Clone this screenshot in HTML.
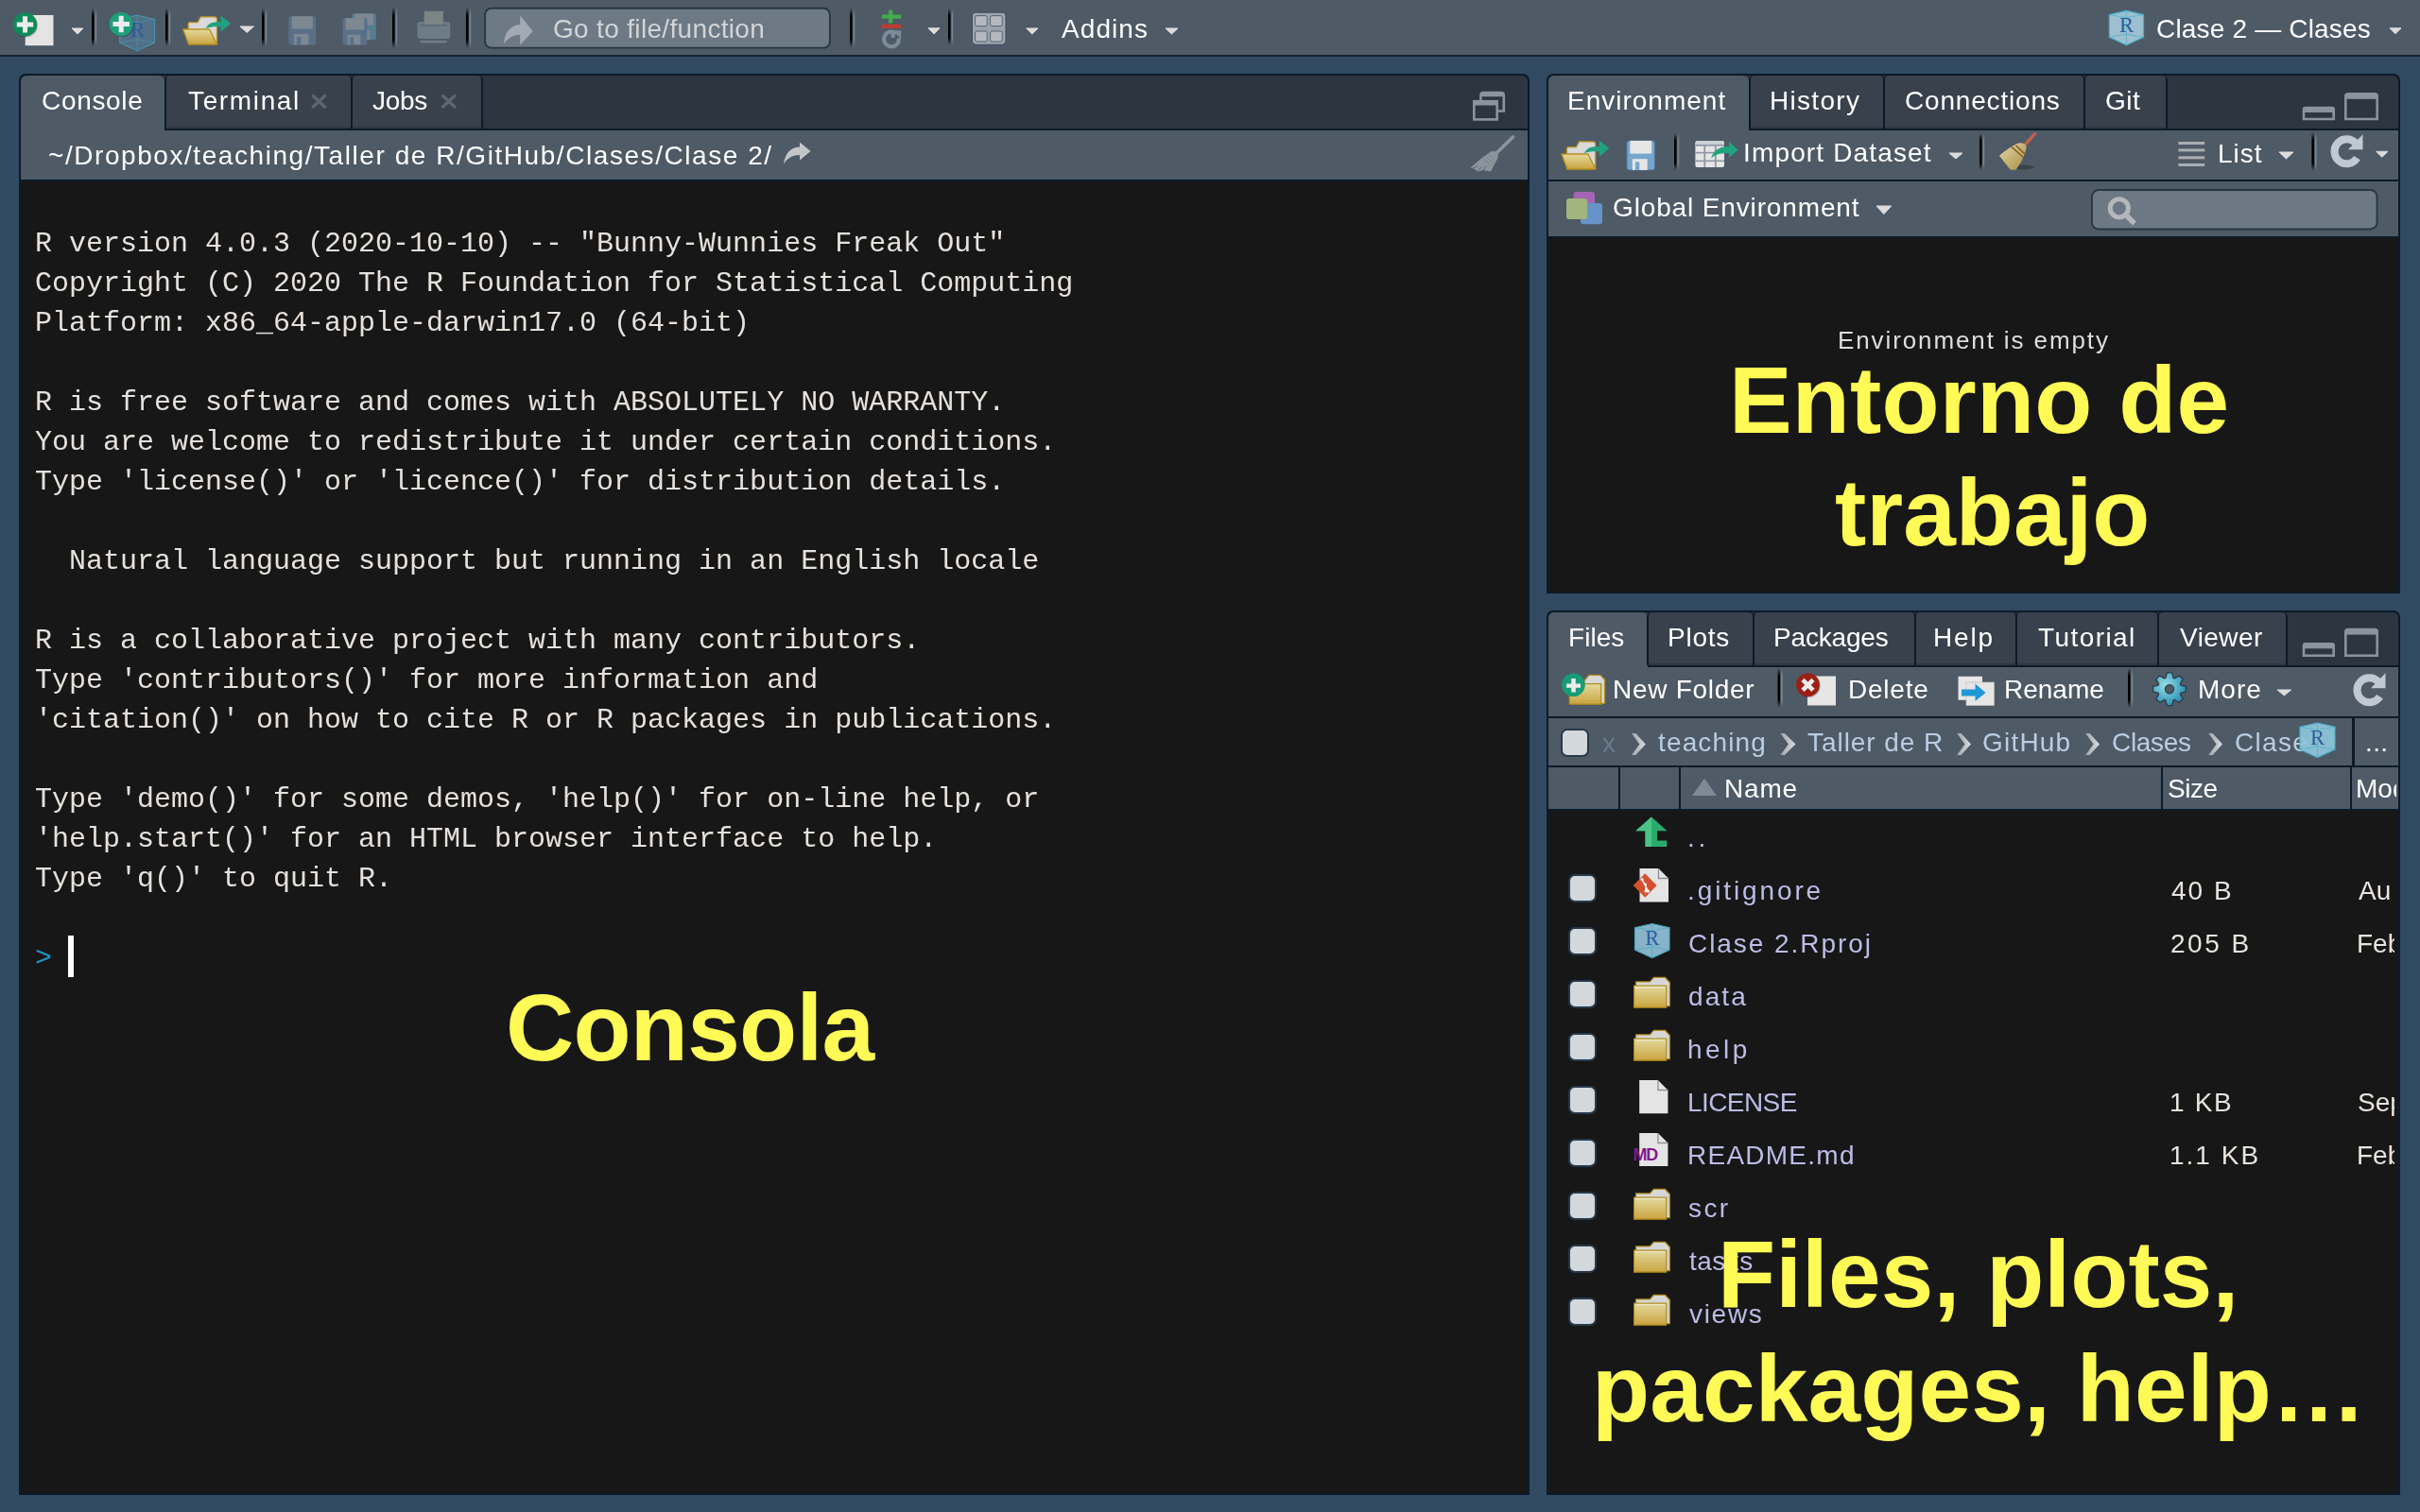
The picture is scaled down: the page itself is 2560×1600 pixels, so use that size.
<!DOCTYPE html>
<html><head><meta charset="utf-8"><title>RStudio</title>
<style>
html,body{margin:0;padding:0;}
body{width:2560px;height:1600px;position:relative;overflow:hidden;background:#314a62;font-family:'Liberation Sans', sans-serif;}
.a{position:absolute;}
.t{white-space:pre;will-change:transform;}
#console,.aa{will-change:transform;}
svg{position:absolute;overflow:visible;}
</style></head><body>
<div class="a" style="left:0px;top:0px;width:2560px;height:58px;background:#4e5a66;"></div><div class="a" style="left:0px;top:58px;width:2560px;height:2px;background:#152433;"></div><div class="a" style="left:20px;top:78px;width:1598px;height:1504px;background:#0c1a29;border-radius:7px 7px 0 0"></div><div class="a" style="left:22px;top:80px;width:1594px;height:56px;background:#2d3640;border-radius:6px 6px 0 0"></div><div class="a" style="left:22px;top:136px;width:1594px;height:2px;background:#0c1a29;"></div><div class="a" style="left:22px;top:80px;width:152px;height:58px;background:#4e5a66;border-radius:6px 6px 0 0"></div><div class="a" style="left:174px;top:80px;width:199px;height:56px;background:#0c1a29;border-radius:5px 5px 0 0"></div><div class="a" style="left:176px;top:80px;width:195px;height:56px;background:#38414c;border-radius:4px 4px 0 0"></div><div class="a" style="left:176px;top:134px;width:195px;height:2px;background:#2f3842;"></div><div class="a" style="left:371px;top:80px;width:140px;height:56px;background:#0c1a29;border-radius:5px 5px 0 0"></div><div class="a" style="left:373px;top:80px;width:136px;height:56px;background:#38414c;border-radius:4px 4px 0 0"></div><div class="a" style="left:373px;top:134px;width:136px;height:2px;background:#2f3842;"></div><div class="a" style="left:22px;top:138px;width:1594px;height:52px;background:#4e5a66;"></div><div class="a" style="left:22px;top:190px;width:1594px;height:2px;background:#0c1a29;"></div><div class="a" style="left:22px;top:192px;width:1594px;height:1388px;background:#171717;"></div><div class="a" style="left:1636px;top:78px;width:903px;height:550px;background:#0c1a29;border-radius:7px 7px 0 0"></div><div class="a" style="left:1638px;top:80px;width:899px;height:56px;background:#2d3640;border-radius:6px 6px 0 0"></div><div class="a" style="left:1638px;top:136px;width:899px;height:2px;background:#0c1a29;"></div><div class="a" style="left:1638px;top:80px;width:212px;height:58px;background:#4e5a66;border-radius:6px 6px 0 0"></div><div class="a" style="left:1850px;top:80px;width:144px;height:56px;background:#0c1a29;border-radius:5px 5px 0 0"></div><div class="a" style="left:1852px;top:80px;width:140px;height:56px;background:#38414c;border-radius:4px 4px 0 0"></div><div class="a" style="left:1852px;top:134px;width:140px;height:2px;background:#2f3842;"></div><div class="a" style="left:1992px;top:80px;width:214px;height:56px;background:#0c1a29;border-radius:5px 5px 0 0"></div><div class="a" style="left:1994px;top:80px;width:210px;height:56px;background:#38414c;border-radius:4px 4px 0 0"></div><div class="a" style="left:1994px;top:134px;width:210px;height:2px;background:#2f3842;"></div><div class="a" style="left:2204px;top:80px;width:89px;height:56px;background:#0c1a29;border-radius:5px 5px 0 0"></div><div class="a" style="left:2206px;top:80px;width:85px;height:56px;background:#38414c;border-radius:4px 4px 0 0"></div><div class="a" style="left:2206px;top:134px;width:85px;height:2px;background:#2f3842;"></div><div class="a" style="left:1638px;top:138px;width:899px;height:52px;background:#4e5a66;"></div><div class="a" style="left:1638px;top:190px;width:899px;height:2px;background:#0c1a29;"></div><div class="a" style="left:1638px;top:192px;width:899px;height:58px;background:#4e5a66;"></div><div class="a" style="left:1638px;top:250px;width:899px;height:2px;background:#0c1a29;"></div><div class="a" style="left:1638px;top:252px;width:899px;height:374px;background:#171717;"></div><div class="a" style="left:1636px;top:646px;width:903px;height:936px;background:#0c1a29;border-radius:7px 7px 0 0"></div><div class="a" style="left:1638px;top:648px;width:899px;height:56px;background:#2d3640;border-radius:6px 6px 0 0"></div><div class="a" style="left:1638px;top:704px;width:899px;height:2px;background:#0c1a29;"></div><div class="a" style="left:1638px;top:648px;width:105px;height:58px;background:#4e5a66;border-radius:6px 6px 0 0"></div><div class="a" style="left:1742px;top:648px;width:114px;height:56px;background:#0c1a29;border-radius:5px 5px 0 0"></div><div class="a" style="left:1744px;top:648px;width:110px;height:56px;background:#38414c;border-radius:4px 4px 0 0"></div><div class="a" style="left:1744px;top:702px;width:110px;height:2px;background:#2f3842;"></div><div class="a" style="left:1854px;top:648px;width:173px;height:56px;background:#0c1a29;border-radius:5px 5px 0 0"></div><div class="a" style="left:1856px;top:648px;width:169px;height:56px;background:#38414c;border-radius:4px 4px 0 0"></div><div class="a" style="left:1856px;top:702px;width:169px;height:2px;background:#2f3842;"></div><div class="a" style="left:2025px;top:648px;width:109px;height:56px;background:#0c1a29;border-radius:5px 5px 0 0"></div><div class="a" style="left:2027px;top:648px;width:105px;height:56px;background:#38414c;border-radius:4px 4px 0 0"></div><div class="a" style="left:2027px;top:702px;width:105px;height:2px;background:#2f3842;"></div><div class="a" style="left:2132px;top:648px;width:152px;height:56px;background:#0c1a29;border-radius:5px 5px 0 0"></div><div class="a" style="left:2134px;top:648px;width:148px;height:56px;background:#38414c;border-radius:4px 4px 0 0"></div><div class="a" style="left:2134px;top:702px;width:148px;height:2px;background:#2f3842;"></div><div class="a" style="left:2282px;top:648px;width:138px;height:56px;background:#0c1a29;border-radius:5px 5px 0 0"></div><div class="a" style="left:2284px;top:648px;width:134px;height:56px;background:#38414c;border-radius:4px 4px 0 0"></div><div class="a" style="left:2284px;top:702px;width:134px;height:2px;background:#2f3842;"></div><div class="a" style="left:1638px;top:706px;width:899px;height:52px;background:#4e5a66;"></div><div class="a" style="left:1638px;top:758px;width:899px;height:2px;background:#0c1a29;"></div><div class="a" style="left:1638px;top:760px;width:899px;height:50px;background:#4e5a66;"></div><div class="a" style="left:1638px;top:810px;width:899px;height:2px;background:#0c1a29;"></div><div class="a" style="left:2487.5px;top:760px;width:3.0px;height:50px;background:#0c1a29;"></div><div class="a" style="left:1638px;top:812px;width:899px;height:44px;background:#4e5a66;"></div><div class="a" style="left:1638px;top:856px;width:899px;height:2px;background:#0c1a29;"></div><div class="a" style="left:1712px;top:812px;width:2px;height:44px;background:#0c1a29;"></div><div class="a" style="left:1776px;top:812px;width:2px;height:44px;background:#0c1a29;"></div><div class="a" style="left:2286px;top:812px;width:2px;height:44px;background:#0c1a29;"></div><div class="a" style="left:2486px;top:812px;width:2px;height:44px;background:#0c1a29;"></div><div class="a" style="left:1638px;top:858px;width:899px;height:722px;background:#171717;"></div><svg class="a" style="left:0;top:0" width="2560" height="1600" viewBox="0 0 2560 1600"><defs>
<linearGradient id="gfold" x1="0" y1="0" x2="0" y2="1"><stop offset="0" stop-color="#e3da9e"/><stop offset="1" stop-color="#c9a440"/></linearGradient>
<linearGradient id="gsep" x1="0" y1="0" x2="0" y2="1"><stop offset="0" stop-color="#000" stop-opacity="0"/><stop offset="0.2" stop-color="#000" stop-opacity="1"/><stop offset="0.8" stop-color="#000" stop-opacity="1"/><stop offset="1" stop-color="#000" stop-opacity="0"/></linearGradient>
<linearGradient id="gsepl" x1="0" y1="0" x2="0" y2="1"><stop offset="0" stop-color="#7a8693" stop-opacity="0"/><stop offset="0.2" stop-color="#7a8693" stop-opacity="1"/><stop offset="0.8" stop-color="#7a8693" stop-opacity="1"/><stop offset="1" stop-color="#7a8693" stop-opacity="0"/></linearGradient>
<linearGradient id="gbroom" x1="0" y1="0" x2="1" y2="1"><stop offset="0" stop-color="#e2d9a6"/><stop offset="1" stop-color="#a98c45"/></linearGradient>
<radialGradient id="ggear" cx="0.38" cy="0.38" r="0.65"><stop offset="0" stop-color="#95dde4"/><stop offset="1" stop-color="#2a8fb4"/></radialGradient>
<linearGradient id="gup" x1="0" y1="0" x2="1" y2="0"><stop offset="0.5" stop-color="#4cc287"/><stop offset="0.5" stop-color="#2aaa6a"/></linearGradient>
<linearGradient id="gchev" x1="0" y1="0" x2="1" y2="0"><stop offset="0" stop-color="#9ca3ab"/><stop offset="1" stop-color="#dcdee0"/></linearGradient>
</defs><rect x="26.7" y="16" width="29.8" height="32.2" fill="#e4e4e4"/><circle cx="27.3" cy="26.9" r="12.6" fill="#000" opacity="0.25"/><circle cx="26.5" cy="25.9" r="12.6" fill="#0c8c58"/><path d="M17.806 23.38 H23.98 V17.206 H29.02 V23.38 H35.194 V28.419999999999998 H29.02 V34.593999999999994 H23.98 V28.419999999999998 H17.806 Z" fill="#ececec"/><path d="M76 30 L88 30 L82.0 36 Z" fill="#dcdcdc" stroke="#dcdcdc" stroke-width="1" stroke-linejoin="round"/><rect x="97" y="9" width="2.6" height="40" fill="url(#gsep)"/><rect x="100.6" y="9" width="1.6" height="40" fill="url(#gsepl)"/><g opacity="0.9"><path d="M145.15 16.2 L163.6 20.5125 L163.6 45.075 L145.15 53.7 L126.7 45.075 L126.7 20.5125 Z" fill="#52728a" stroke="#4898b3" stroke-width="1.2"/><path d="M145.15 16.2 V53.7 M126.7 20.5125 L145.15 23.7 L163.6 20.5125 M126.7 45.075 L145.15 41.7 L163.6 45.075" stroke="#4898b3" stroke-width="0.9" fill="none" opacity="0.8"/><text x="145.15" y="39.45" font-family="Liberation Serif" font-size="23.2" fill="#2a5fa8" text-anchor="middle">R</text></g><circle cx="129.0" cy="26.5" r="12.6" fill="#000" opacity="0.25"/><circle cx="128.2" cy="25.5" r="12.6" fill="#1f9f79"/><path d="M119.50599999999999 22.98 H125.67999999999999 V16.806 H130.72 V22.98 H136.89399999999998 V28.02 H130.72 V34.194 H125.67999999999999 V28.02 H119.50599999999999 Z" fill="#ececec"/><rect x="175" y="9" width="2.6" height="40" fill="url(#gsep)"/><rect x="178.6" y="9" width="1.6" height="40" fill="url(#gsepl)"/><g transform="translate(193.7 17) scale(1.0)"><path d="M5.4 14 V8.5 Q5.4 6.7 7.2 6.7 H15.3 L18.6 0.8 H33.2 Q35.8 0.8 35.8 3.5 V29.9 H6 Z" fill="#d9d9d9" stroke="#b8901c" stroke-width="1.3" stroke-linejoin="round"/><path d="M-0.1 14 H27.9 L35.8 29.9 H6 Z" fill="url(#gfold)" stroke="#b8901c" stroke-width="1.3" stroke-linejoin="round"/><path d="M23.9 13 C 27 6.5, 33 5.8, 39.8 6.3 V-0.5 L50.3 8 L39.8 16.7 V11.5 C 33 11, 28 11.8, 23.9 13 Z" fill="#21a27f"/></g><path d="M254 28 L268.5 28 L261.25 34.4 Z" fill="#dcdcdc" stroke="#dcdcdc" stroke-width="1" stroke-linejoin="round"/><rect x="277" y="9" width="2.6" height="40" fill="url(#gsep)"/><rect x="280.6" y="9" width="1.6" height="40" fill="url(#gsepl)"/><g opacity="1.0"><rect x="305.2" y="17.2" width="29.0" height="30.2" rx="2.5" fill="#5a7088"/><rect x="308.59299999999996" y="17.2" width="22.214" height="13.288" fill="#7d8893"/><rect x="311.0" y="35.924" width="15.370000000000001" height="11.475999999999999" fill="#7d8893"/><rect x="313.9" y="38.944" width="4.35" height="8.456000000000001" fill="#5a7088"/></g><g opacity="1.0"><rect x="372.3" y="14.4" width="25.5" height="27.9" rx="2.5" fill="#567d92"/><rect x="375.2835" y="14.4" width="19.533" height="12.276" fill="#7d8893"/><rect x="377.40000000000003" y="31.698" width="13.515" height="10.602" fill="#7d8893"/><rect x="379.95" y="34.488" width="3.8249999999999997" height="7.812" fill="#567d92"/></g><g opacity="1.0"><rect x="362.5" y="19.1" width="25.899999999999977" height="28.299999999999997" rx="2.5" fill="#5a7088"/><rect x="365.5303" y="19.1" width="19.839399999999983" height="12.451999999999998" fill="#7d8893"/><rect x="367.68" y="36.646" width="13.726999999999988" height="10.754" fill="#7d8893"/><rect x="370.27" y="39.476" width="3.8849999999999962" height="7.924" fill="#5a7088"/></g><rect x="415" y="8" width="2.6" height="43" fill="url(#gsep)"/><rect x="418.6" y="8" width="1.6" height="43" fill="url(#gsepl)"/><rect x="448.8" y="11.7" width="20.1" height="17" fill="#7b8586"/><rect x="441.4" y="23" width="34.9" height="18" rx="3.5" fill="#6e7b88"/><rect x="444.5" y="25.5" width="28.3" height="2" fill="#5c6874"/><rect x="448.8" y="18" width="20.1" height="8" fill="#7b8586"/><rect x="444.5" y="42.7" width="28.3" height="2.7" rx="1" fill="#6e7b88"/><rect x="493" y="8" width="2.6" height="43" fill="url(#gsep)"/><rect x="496.6" y="8" width="1.6" height="43" fill="url(#gsepl)"/><rect x="513.1" y="8.8" width="364.8" height="41.8" rx="6.5" fill="#6d7a85" stroke="#263646" stroke-width="1.9"/><path d="M563.7 33.1 L550.2 16.6 V26 C 540 26.5, 533.5 35, 533 46.3 C 537.5 40.5, 543 36.8, 550.2 36.8 V47.6 Z" fill="#a3a9b5"/><rect x="899" y="8.6" width="2.6" height="41.4" fill="url(#gsep)"/><rect x="902.6" y="8.6" width="1.6" height="41.4" fill="url(#gsepl)"/><rect x="933" y="15.5" width="20.2" height="4.1" fill="#3fae49"/><rect x="940.1" y="10.6" width="4.1" height="13.9" fill="#3fae49"/><rect x="933" y="25.8" width="20.2" height="4" fill="#c23b2e"/><path d="M944.5 33.7 A 7.9 7.9 0 1 0 950.8 40.2" fill="none" stroke="#7d8c9b" stroke-width="4"/><path d="M942.6 32.3 H953.2 V41 L948.5 36.5 H946.5 V40 H942.6 Z" fill="#7d8c9b"/><path d="M982 29.8 L994 29.8 L988.0 36 Z" fill="#dcdcdc" stroke="#dcdcdc" stroke-width="1" stroke-linejoin="round"/><rect x="1003" y="8.7" width="2.6" height="39.099999999999994" fill="url(#gsep)"/><rect x="1006.6" y="8.7" width="1.6" height="39.099999999999994" fill="url(#gsepl)"/><rect x="1028.4" y="13.2" width="35.6" height="34.1" rx="4" fill="#9aa3ad" stroke="#3b4957" stroke-width="1"/><rect x="1031.6" y="16.6" width="12.6" height="11" rx="2" fill="#b5b9bd" stroke="#56636f" stroke-width="1"/><rect x="1047.6" y="16.6" width="12.6" height="11" rx="2" fill="#b5b9bd" stroke="#56636f" stroke-width="1"/><rect x="1031.6" y="33" width="12.6" height="11" rx="2" fill="#b5b9bd" stroke="#56636f" stroke-width="1"/><rect x="1047.6" y="33" width="12.6" height="11" rx="2" fill="#b5b9bd" stroke="#56636f" stroke-width="1"/><path d="M1085.7 30 L1098 30 L1091.85 36 Z" fill="#dcdcdc" stroke="#dcdcdc" stroke-width="1" stroke-linejoin="round"/><path d="M1233 30 L1246 30 L1239.5 36 Z" fill="#dcdcdc" stroke="#dcdcdc" stroke-width="1" stroke-linejoin="round"/><g opacity="1.0"><path d="M2249.4 11.4 L2267.5 15.5745 L2267.5 39.351000000000006 L2249.4 47.7 L2231.3 39.351000000000006 L2231.3 15.5745 Z" fill="#9ebfd0" stroke="#4bb0c8" stroke-width="1.2"/><path d="M2249.4 11.4 V47.7 M2231.3 15.5745 L2249.4 18.660000000000004 L2267.5 15.5745 M2231.3 39.351000000000006 L2249.4 36.084 L2267.5 39.351000000000006" stroke="#4bb0c8" stroke-width="0.9" fill="none" opacity="0.8"/><text x="2249.4" y="33.906000000000006" font-family="Liberation Serif" font-size="22.5" fill="#2c5d9e" text-anchor="middle">R</text></g><path d="M2528 29.8 L2540 29.8 L2534.0 35.7 Z" fill="#dcdcdc" stroke="#dcdcdc" stroke-width="1" stroke-linejoin="round"/><path d="M330.3 100.5 L344.5 114 M344.5 100.5 L330.3 114" stroke="#5d6670" stroke-width="3.4"/><path d="M467.5 100.5 L482.0 114 M482.0 100.5 L467.5 114" stroke="#5d6670" stroke-width="3.4"/><path d="M1566.4 118 V101 Q1566.4 98 1569.5 98 H1588 Q1590.8 98 1590.8 101 V117.5 H1584" fill="none" stroke="#8b949c" stroke-width="2.6"/><rect x="1566.4" y="97.3" width="24.4" height="5" rx="2" fill="#8b949c"/><rect x="1559.3" y="107.2" width="24.4" height="19.2" fill="#2d3640" stroke="#8b949c" stroke-width="2.6"/><path d="M1558 111.5 V108.5 Q1558 106 1561 106 H1582 Q1585 106 1585 108.5 V111.5 Z" fill="#8b949c"/><path d="M857.5 160 L846 150.5 V155.5 C 838 155.5, 830.5 161, 829 173.5 C 833 167, 839 164, 846 164 V169.5 Z" fill="#c4c7ca"/><path d="M1600.5 145 L1582 163" stroke="#8b949c" stroke-width="3.6" stroke-linecap="round"/><path d="M1577 160.5 Q1580.5 158.5 1584.5 162.5 Q1585.5 166 1583 170 L1577 181.5 L1569 180 L1563 181.5 L1559 178.5 L1555.5 177.5 Q1562 172 1566.5 168 Z" fill="#8b949c"/><path d="M1569 168 L1578 176 M1571.5 165.5 L1580.5 173.5 M1574 163 L1582.5 170.5" stroke="#7a838b" stroke-width="0.9"/><path d="M1558 178 L1563 176 M1563 181 L1567 177 M1569 180.5 L1572 176" stroke="#4e5a66" stroke-width="0.8"/><path d="M2437 126.0 V115.7 Q2437 114.0 2439 114.0 H2467 Q2468.7 114.0 2468.7 115.7 V126.0 Z" fill="none" stroke="#8b949c" stroke-width="2.6"/><rect x="2437" y="114.0" width="31.7" height="5" fill="#8b949c"/><path d="M2481.3 126.0 V101.5 Q2481.3 99.3 2484 99.3 H2512 Q2514.7 99.3 2514.7 101.5 V126.0 Z" fill="none" stroke="#8b949c" stroke-width="2.6"/><rect x="2481.3" y="99.3" width="33.4" height="5.5" fill="#8b949c"/><g transform="translate(1652 149) scale(1.0)"><path d="M5.4 14 V8.5 Q5.4 6.7 7.2 6.7 H15.3 L18.6 0.8 H33.2 Q35.8 0.8 35.8 3.5 V29.9 H6 Z" fill="#d9d9d9" stroke="#b8901c" stroke-width="1.3" stroke-linejoin="round"/><path d="M-0.1 14 H27.9 L35.8 29.9 H6 Z" fill="url(#gfold)" stroke="#b8901c" stroke-width="1.3" stroke-linejoin="round"/><path d="M23.9 13 C 27 6.5, 33 5.8, 39.8 6.3 V-0.5 L50.3 8 L39.8 16.7 V11.5 C 33 11, 28 11.8, 23.9 13 Z" fill="#21a27f"/></g><g opacity="1.0"><rect x="1720.9" y="148.9" width="29.799999999999955" height="31.099999999999994" rx="2.5" fill="#77a5cc" stroke="#4a6d8e" stroke-width="1"/><rect x="1724.3866" y="148.9" width="22.826799999999967" height="13.683999999999997" fill="#e6e6e6"/><rect x="1726.8600000000001" y="168.18200000000002" width="15.793999999999977" height="11.817999999999998" fill="#e6e6e6"/><rect x="1729.8400000000001" y="171.292" width="4.469999999999993" height="8.707999999999998" fill="#77a5cc"/></g><rect x="1771" y="141" width="2.6" height="39" fill="url(#gsep)"/><rect x="1774.6" y="141" width="1.6" height="39" fill="url(#gsepl)"/><rect x="1793.4" y="148.9" width="30.6" height="28.2" rx="2" fill="#e6e6e6"/><path d="M1793.4 152.5 Q1793.4 148.9 1797 148.9 H1820.4 Q1824 148.9 1824 152.5 V153 H1793.4 Z" fill="#c8d0d8"/><rect x="1793.4" y="153" width="30.6" height="1.6" fill="#8e96a2"/><rect x="1793.4" y="160.8" width="30.6" height="1.6" fill="#8e96a2"/><rect x="1793.4" y="169.5" width="30.6" height="1.6" fill="#8e96a2"/><rect x="1802.4" y="153" width="1.8" height="24.1" fill="#8e96a2"/><rect x="1813.9" y="153" width="1.8" height="24.1" fill="#8e96a2"/><path d="M1810 167.4 C 1813 158, 1820 155, 1829 155 V150 L1838.6 158.5 L1829 166.9 V162 C 1821 161.5, 1815 163, 1810 167.4 Z" fill="#20a47f"/><path d="M2062 162 L2076 162 L2069.0 168 Z" fill="#dcdcdc" stroke="#dcdcdc" stroke-width="1" stroke-linejoin="round"/><rect x="2094" y="141" width="2.6" height="39" fill="url(#gsep)"/><rect x="2097.6" y="141" width="1.6" height="39" fill="url(#gsepl)"/><ellipse cx="2140" cy="177" rx="12" ry="2.5" fill="#000" opacity="0.25"/><path d="M2152.6 141.6 L2142.4 152.9" stroke="#c0604e" stroke-width="3.5" stroke-linecap="round"/><path d="M2114.9 164.8 Q2125 156 2134.8 151.5 Q2141 150 2143.7 155 Q2143 162 2138 171.4 L2132.5 179.7 H2126.8 Z" fill="url(#gbroom)"/><path d="M2128 155.5 L2141 167 M2132.5 154 L2142.5 163.5" stroke="#8a5a20" stroke-width="1.6"/><rect x="2304.4" y="150.0" width="27.8" height="3" fill="#a9aeb3"/><rect x="2304.4" y="157.4" width="27.8" height="3" fill="#a9aeb3"/><rect x="2304.4" y="165.29999999999998" width="27.8" height="3" fill="#a9aeb3"/><rect x="2304.4" y="173.0" width="27.8" height="3" fill="#a9aeb3"/><path d="M2411 161 L2426 161 L2418.5 168 Z" fill="#dcdcdc" stroke="#dcdcdc" stroke-width="1" stroke-linejoin="round"/><rect x="2445.4" y="140" width="2.6" height="40.69999999999999" fill="url(#gsep)"/><rect x="2449.0" y="140" width="1.6" height="40.69999999999999" fill="url(#gsepl)"/><path d="M2493.52 167.19 A13 13 0 1 1 2492.16 151.60" fill="none" stroke="#c0c8d2" stroke-width="8"/><path d="M2499.5 142.3 L2499.5 158.3 L2484.0 158.3 Z" fill="#c0c8d2"/><path d="M2513.7 160.3 L2526 160.3 L2519.85 166.3 Z" fill="#dcdcdc" stroke="#dcdcdc" stroke-width="1" stroke-linejoin="round"/><rect x="1664.6" y="203" width="22.5" height="21.5" rx="3" fill="#a565b3"/><rect x="1672" y="215" width="23" height="22.3" rx="3" fill="#6693c8"/><rect x="1657" y="210" width="22.2" height="22" rx="3" fill="#a2b57c"/><path d="M1985 218 L2000.7 218 L1992.85 226.6 Z" fill="#dcdcdc" stroke="#dcdcdc" stroke-width="1" stroke-linejoin="round"/><rect x="2213" y="201" width="301.5" height="41.5" rx="7" fill="#6c7883" stroke="#253545" stroke-width="1.8"/><circle cx="2241.8" cy="220.3" r="9.6" fill="none" stroke="#b3b8bd" stroke-width="5"/><path d="M2248.5 227 L2258 236.5" stroke="#b3b8bd" stroke-width="5.5"/><path d="M2437 693.7 V683 Q2437 681.3 2439 681.3 H2467 Q2468.7 681.3 2468.7 683 V693.7 Z" fill="none" stroke="#8b949c" stroke-width="2.6"/><rect x="2437" y="681.3" width="31.7" height="5" fill="#8b949c"/><path d="M2481.3 693.7 V668.3 Q2481.3 666.0999999999999 2484 666.0999999999999 H2512 Q2514.7 666.0999999999999 2514.7 668.3 V693.7 Z" fill="none" stroke="#8b949c" stroke-width="2.6"/><rect x="2481.3" y="666.0999999999999" width="33.4" height="5.5" fill="#8b949c"/><path d="M1675.8 720.5 L1681 714.4 H1693 L1697.6 719.2 V744.4 H1675.8 Z" fill="#d6d8d8" stroke="#b08a1a" stroke-width="1.3" stroke-linejoin="round"/><rect x="1660.2" y="723.6" width="33.5" height="21.6" fill="url(#gfold)" stroke="#b08a1a" stroke-width="1.2"/><circle cx="1664.5" cy="724.8" r="12.3" fill="#189c78"/><path d="M1657.1 723.4 H1662.2 V718 H1666.8 V723.4 H1672 V727.8 H1666.8 V732.5 H1662.2 V727.8 H1657.1 Z" fill="#ececec"/><rect x="1880.5" y="707" width="2.6" height="42" fill="url(#gsep)"/><rect x="1884.1" y="707" width="1.6" height="42" fill="url(#gsepl)"/><rect x="1912" y="715.5" width="30" height="31" fill="#e6e6e6"/><circle cx="1913.5" cy="725.8" r="12.4" fill="#000" opacity="0.2"/><circle cx="1912.5" cy="724.8" r="12.4" fill="#9c1f14"/><path d="M1907 719.3 L1918 730.3 M1918 719.3 L1907 730.3" stroke="#ececec" stroke-width="4.6"/><rect x="2071.5" y="715.8" width="25.5" height="25" fill="#e6e6e6"/><rect x="2080" y="722" width="29.5" height="24.5" fill="#e6e6e6" stroke="#bdbdbd" stroke-width="0.7"/><path d="M2075 729.5 H2089.5 V723.5 L2100.5 733 L2089.5 742 V736.5 H2075 Z" fill="#1d98d8"/><rect x="2251" y="707" width="2.6" height="42" fill="url(#gsep)"/><rect x="2254.6" y="707" width="1.6" height="42" fill="url(#gsepl)"/><path d="M2312.38 726.45 L2312.38 731.95 L2306.91 733.30 L2306.32 734.72 L2309.24 739.55 L2305.35 743.44 L2300.52 740.52 L2299.10 741.11 L2297.75 746.58 L2292.25 746.58 L2290.90 741.11 L2289.48 740.52 L2284.65 743.44 L2280.76 739.55 L2283.68 734.72 L2283.09 733.30 L2277.62 731.95 L2277.62 726.45 L2283.09 725.10 L2283.68 723.68 L2280.76 718.85 L2284.65 714.96 L2289.48 717.88 L2290.90 717.29 L2292.25 711.82 L2297.75 711.82 L2299.10 717.29 L2300.52 717.88 L2305.35 714.96 L2309.24 718.85 L2306.32 723.68 L2306.91 725.10 Z" fill="url(#ggear)" stroke="#2b3b4a" stroke-width="1.3" stroke-linejoin="round"/><circle cx="2295" cy="729.2" r="4.6" fill="#4e5a66" stroke="#2b3b4a" stroke-width="1.2"/><path d="M2409 730 L2423.6 730 L2416.3 736 Z" fill="#dcdcdc" stroke="#dcdcdc" stroke-width="1" stroke-linejoin="round"/><path d="M2517.52 737.09 A13 13 0 1 1 2516.16 721.50" fill="none" stroke="#c0c8d2" stroke-width="8"/><path d="M2523.5 712.2 L2523.5 728.2 L2508.0 728.2 Z" fill="#c0c8d2"/><rect x="1652" y="772" width="28" height="28" rx="6" fill="#d3d8dc" stroke="#27394b" stroke-width="2"/><path d="M1725.9 776 H1730.3 L1740.8 787.5 L1730.3 799 H1725.9 L1734.4 787.5 Z" fill="url(#gchev)"/><path d="M1883.4 776 H1887.8 L1899.5 787.5 L1887.8 799 H1883.4 L1891.9 787.5 Z" fill="url(#gchev)"/><path d="M2070.1 776 H2074.5 L2085 787.5 L2074.5 799 H2070.1 L2078.6 787.5 Z" fill="url(#gchev)"/><path d="M2206.1 776 H2210.5 L2221 787.5 L2210.5 799 H2206.1 L2214.6 787.5 Z" fill="url(#gchev)"/><path d="M2336.2000000000003 776 H2340.6000000000004 L2351 787.5 L2340.6000000000004 799 H2336.2000000000003 L2344.7000000000003 787.5 Z" fill="url(#gchev)"/><path d="M1790 842 L1803 823.7 L1816 842 Z" fill="#7f8896"/><path d="M1747 864.6 L1763.5 879.2 H1753 V889.5 H1763.3 V896 H1747 V879.2 H1730.3 Z" fill="#2bab6b"/><path d="M1747 864.6 L1730.3 879.2 H1740.3 V896 H1747 Z" fill="#4cc287"/><rect x="1660" y="926" width="28" height="28" rx="6" fill="#d3d8dc" stroke="#27394b" stroke-width="2"/><rect x="1660" y="982" width="28" height="28" rx="6" fill="#d3d8dc" stroke="#27394b" stroke-width="2"/><rect x="1660" y="1038" width="28" height="28" rx="6" fill="#d3d8dc" stroke="#27394b" stroke-width="2"/><rect x="1660" y="1094" width="28" height="28" rx="6" fill="#d3d8dc" stroke="#27394b" stroke-width="2"/><rect x="1660" y="1150" width="28" height="28" rx="6" fill="#d3d8dc" stroke="#27394b" stroke-width="2"/><rect x="1660" y="1206" width="28" height="28" rx="6" fill="#d3d8dc" stroke="#27394b" stroke-width="2"/><rect x="1660" y="1262" width="28" height="28" rx="6" fill="#d3d8dc" stroke="#27394b" stroke-width="2"/><rect x="1660" y="1318" width="28" height="28" rx="6" fill="#d3d8dc" stroke="#27394b" stroke-width="2"/><rect x="1660" y="1374" width="28" height="28" rx="6" fill="#d3d8dc" stroke="#27394b" stroke-width="2"/><path d="M1734.5 919 H1754.5 L1765.0 929.5 V954.5 H1734.5 Z" fill="#e4e4e4"/><path d="M1754.5 919 V929.5 H1765.0" fill="none" stroke="#8f9294" stroke-width="1.3"/><path d="M1740.2 924.3 L1752.6 937 L1740.2 949.7 L1727.7 937 Z" fill="#d4502f"/><path d="M1737 930.5 L1743.5 943 M1741 934.5 L1741 943" stroke="#f5f5f5" stroke-width="1.6"/><circle cx="1737" cy="930.5" r="1.6" fill="#f5f5f5"/><circle cx="1743.5" cy="943" r="1.6" fill="#f5f5f5"/><circle cx="1741" cy="943" r="1.5" fill="#f5f5f5"/><g opacity="1.0"><path d="M1747.75 977.5 L1766 981.64 L1766 1005.22 L1747.75 1013.5 L1729.5 1005.22 L1729.5 981.64 Z" fill="#88b3c8" stroke="#47aac4" stroke-width="1.2"/><path d="M1747.75 977.5 V1013.5 M1729.5 981.64 L1747.75 984.7 L1766 981.64 M1729.5 1005.22 L1747.75 1001.98 L1766 1005.22" stroke="#47aac4" stroke-width="0.9" fill="none" opacity="0.8"/><text x="1747.75" y="999.82" font-family="Liberation Serif" font-size="22.3" fill="#2c5d9e" text-anchor="middle">R</text></g><g transform="translate(1728 1033.9)"><path d="M2.6 5 H17.5 L21.4 0.4 H33.3 L38.3 5.9 V30.8 H2.6 Z" fill="#d6d8d8" stroke="#b08a1a" stroke-width="1.3" stroke-linejoin="round"/><path d="M0.6 9.2 H34.7 V32.3 H0.6 Z" fill="url(#gfold)" stroke="#b08a1a" stroke-width="1.2"/><rect x="1.5" y="10" width="32.3" height="1.3" fill="#ecebd8" opacity="0.8"/></g><g transform="translate(1728 1089.9)"><path d="M2.6 5 H17.5 L21.4 0.4 H33.3 L38.3 5.9 V30.8 H2.6 Z" fill="#d6d8d8" stroke="#b08a1a" stroke-width="1.3" stroke-linejoin="round"/><path d="M0.6 9.2 H34.7 V32.3 H0.6 Z" fill="url(#gfold)" stroke="#b08a1a" stroke-width="1.2"/><rect x="1.5" y="10" width="32.3" height="1.3" fill="#ecebd8" opacity="0.8"/></g><g transform="translate(1728 1257.9)"><path d="M2.6 5 H17.5 L21.4 0.4 H33.3 L38.3 5.9 V30.8 H2.6 Z" fill="#d6d8d8" stroke="#b08a1a" stroke-width="1.3" stroke-linejoin="round"/><path d="M0.6 9.2 H34.7 V32.3 H0.6 Z" fill="url(#gfold)" stroke="#b08a1a" stroke-width="1.2"/><rect x="1.5" y="10" width="32.3" height="1.3" fill="#ecebd8" opacity="0.8"/></g><g transform="translate(1728 1313.9)"><path d="M2.6 5 H17.5 L21.4 0.4 H33.3 L38.3 5.9 V30.8 H2.6 Z" fill="#d6d8d8" stroke="#b08a1a" stroke-width="1.3" stroke-linejoin="round"/><path d="M0.6 9.2 H34.7 V32.3 H0.6 Z" fill="url(#gfold)" stroke="#b08a1a" stroke-width="1.2"/><rect x="1.5" y="10" width="32.3" height="1.3" fill="#ecebd8" opacity="0.8"/></g><g transform="translate(1728 1369.9)"><path d="M2.6 5 H17.5 L21.4 0.4 H33.3 L38.3 5.9 V30.8 H2.6 Z" fill="#d6d8d8" stroke="#b08a1a" stroke-width="1.3" stroke-linejoin="round"/><path d="M0.6 9.2 H34.7 V32.3 H0.6 Z" fill="url(#gfold)" stroke="#b08a1a" stroke-width="1.2"/><rect x="1.5" y="10" width="32.3" height="1.3" fill="#ecebd8" opacity="0.8"/></g><path d="M1734.2 1143 H1753.9 L1764.4 1153.5 V1178.3 H1734.2 Z" fill="#e4e4e4"/><path d="M1753.9 1143 V1153.5 H1764.4" fill="none" stroke="#8f9294" stroke-width="1.3"/><path d="M1734.2 1199 H1753.9 L1764.4 1209.5 V1233.9 H1734.2 Z" fill="#e4e4e4"/><path d="M1753.9 1199 V1209.5 H1764.4" fill="none" stroke="#8f9294" stroke-width="1.3"/><text x="1727.5" y="1227.7" font-family="Liberation Sans" font-weight="bold" font-size="18" fill="#82198a" letter-spacing="-1.2">MD</text></svg><div class="a t" id="t_goto" style="left:585.0px;top:16.7px;font-size:28px;line-height:28px;color:#d2d4d6;letter-spacing:0.33px;">Go to file/function</div><div class="a t" id="t_addins" style="left:1122.6px;top:17.0px;font-size:28px;line-height:28px;color:#ffffff;letter-spacing:1.08px;">Addins</div><div class="a t" id="t_proj" style="left:2280.8px;top:17.2px;font-size:28px;line-height:28px;color:#ffffff;letter-spacing:0.18px;">Clase 2 — Clases</div><div class="a t" id="t_console" style="left:44.0px;top:93.0px;font-size:28px;line-height:28px;color:#ffffff;letter-spacing:0.67px;">Console</div><div class="a t" id="t_terminal" style="left:198.5px;top:93.3px;font-size:28px;line-height:28px;color:#ffffff;letter-spacing:1.64px;">Terminal</div><div class="a t" id="t_jobs" style="left:394.0px;top:93.3px;font-size:28px;line-height:28px;color:#ffffff;letter-spacing:-0.27px;">Jobs</div><div class="a t" id="t_path" style="left:51.0px;top:150.6px;font-size:28px;line-height:28px;color:#ffffff;letter-spacing:1.56px;">~/Dropbox/teaching/Taller de R/GitHub/Clases/Clase 2/</div><div class="a t" id="t_envtab" style="left:1658.0px;top:93.0px;font-size:28px;line-height:28px;color:#ffffff;letter-spacing:1.00px;">Environment</div><div class="a t" id="t_history" style="left:1872.0px;top:93.0px;font-size:28px;line-height:28px;color:#ffffff;letter-spacing:1.30px;">History</div><div class="a t" id="t_conn" style="left:2014.8px;top:93.0px;font-size:28px;line-height:28px;color:#ffffff;letter-spacing:0.82px;">Connections</div><div class="a t" id="t_git" style="left:2226.8px;top:93.0px;font-size:28px;line-height:28px;color:#ffffff;letter-spacing:0.45px;">Git</div><div class="a t" id="t_import" style="left:1844.0px;top:148.4px;font-size:28px;line-height:28px;color:#ffffff;letter-spacing:1.15px;">Import Dataset</div><div class="a t" id="t_list" style="left:2346.0px;top:149.0px;font-size:28px;line-height:28px;color:#ffffff;letter-spacing:1.00px;">List</div><div class="a t" id="t_global" style="left:1706.4px;top:205.6px;font-size:28px;line-height:28px;color:#ffffff;letter-spacing:0.86px;">Global Environment</div><div class="a t" id="t_empty" style="left:1944.0px;top:347.0px;font-size:26px;line-height:26px;color:#dedede;letter-spacing:1.89px;">Environment is empty</div><div class="a t" id="t_files" style="left:1658.8px;top:661.0px;font-size:28px;line-height:28px;color:#ffffff;letter-spacing:0.05px;">Files</div><div class="a t" id="t_plots" style="left:1763.7px;top:661.0px;font-size:28px;line-height:28px;color:#ffffff;letter-spacing:0.77px;">Plots</div><div class="a t" id="t_packages" style="left:1876.0px;top:661.0px;font-size:28px;line-height:28px;color:#ffffff;letter-spacing:-0.17px;">Packages</div><div class="a t" id="t_help" style="left:2045.0px;top:661.0px;font-size:28px;line-height:28px;color:#ffffff;letter-spacing:1.87px;">Help</div><div class="a t" id="t_tutorial" style="left:2156.0px;top:661.0px;font-size:28px;line-height:28px;color:#ffffff;letter-spacing:1.43px;">Tutorial</div><div class="a t" id="t_viewer" style="left:2305.7px;top:661.0px;font-size:28px;line-height:28px;color:#ffffff;letter-spacing:0.46px;">Viewer</div><div class="a t" id="t_newfolder" style="left:1706.4px;top:715.5px;font-size:28px;line-height:28px;color:#ffffff;letter-spacing:0.71px;">New Folder</div><div class="a t" id="t_delete" style="left:1954.5px;top:715.5px;font-size:28px;line-height:28px;color:#ffffff;letter-spacing:0.76px;">Delete</div><div class="a t" id="t_rename" style="left:2120.0px;top:715.5px;font-size:28px;line-height:28px;color:#ffffff;">Rename</div><div class="a t" id="t_more" style="left:2324.5px;top:715.5px;font-size:28px;line-height:28px;color:#ffffff;letter-spacing:1.03px;">More</div><div class="a t" id="t_x" style="left:1695.0px;top:773.0px;font-size:28px;line-height:28px;color:#6a7b8c;">x</div><div class="a t" id="t_bc1" style="left:1754.0px;top:772.2px;font-size:28px;line-height:28px;color:#b9cde3;letter-spacing:1.14px;">teaching</div><div class="a t" id="t_bc2" style="left:1912.0px;top:772.2px;font-size:28px;line-height:28px;color:#b9cde3;letter-spacing:0.95px;">Taller de R</div><div class="a t" id="t_bc3" style="left:2097.0px;top:772.2px;font-size:28px;line-height:28px;color:#b9cde3;letter-spacing:1.20px;">GitHub</div><div class="a t" id="t_bc4" style="left:2233.6px;top:772.2px;font-size:28px;line-height:28px;color:#b9cde3;letter-spacing:-0.32px;">Clases</div><div class="a t" id="t_bc5" style="left:2363.8px;top:772.2px;font-size:28px;line-height:28px;color:#b9cde3;letter-spacing:1.30px;">Clase</div><div class="a t" id="t_dots" style="left:2502.0px;top:771.5px;font-size:28px;line-height:28px;color:#ffffff;letter-spacing:0.40px;">...</div><div class="a t" id="t_name" style="left:1824.0px;top:820.7px;font-size:28px;line-height:28px;color:#ffffff;letter-spacing:0.83px;">Name</div><div class="a t" id="t_size" style="left:2292.5px;top:820.5px;font-size:28px;line-height:28px;color:#ffffff;letter-spacing:-0.50px;">Size</div><div class="a t" id="t_mod" style="left:2492.0px;top:820.5px;font-size:28px;line-height:28px;color:#ffffff;width:43px;overflow:hidden;">Modified</div><div class="a t" id="t_fn0" style="left:1785.0px;top:873.0px;font-size:28px;line-height:28px;color:#bcbce6;letter-spacing:3.80px;">..</div><div class="a t" id="t_fn1" style="left:1785.0px;top:929.0px;font-size:28px;line-height:28px;color:#bcbce6;letter-spacing:2.89px;">.gitignore</div><div class="a t" id="t_sz1" style="left:2297.0px;top:929.0px;font-size:28px;line-height:28px;color:#e8e4de;letter-spacing:2.00px;">40 B</div><div class="a t" id="t_md1" style="left:2495.0px;top:929.0px;font-size:28px;line-height:28px;color:#e8e4de;width:38.0px;overflow:hidden;">Au</div><div class="a t" id="t_fn2" style="left:1786.0px;top:985.0px;font-size:28px;line-height:28px;color:#bcbce6;letter-spacing:1.95px;">Clase 2.Rproj</div><div class="a t" id="t_sz2" style="left:2296.0px;top:985.0px;font-size:28px;line-height:28px;color:#e8e4de;letter-spacing:2.50px;">205 B</div><div class="a t" id="t_md2" style="left:2493.0px;top:985.0px;font-size:28px;line-height:28px;color:#e8e4de;width:40.0px;overflow:hidden;">Feb</div><div class="a t" id="t_fn3" style="left:1786.0px;top:1041.0px;font-size:28px;line-height:28px;color:#bcbce6;letter-spacing:2.10px;">data</div><div class="a t" id="t_fn4" style="left:1785.0px;top:1097.0px;font-size:28px;line-height:28px;color:#bcbce6;letter-spacing:3.43px;">help</div><div class="a t" id="t_fn5" style="left:1785.0px;top:1153.0px;font-size:28px;line-height:28px;color:#bcbce6;letter-spacing:-0.58px;">LICENSE</div><div class="a t" id="t_sz5" style="left:2295.0px;top:1153.0px;font-size:28px;line-height:28px;color:#e8e4de;letter-spacing:1.67px;">1 KB</div><div class="a t" id="t_md5" style="left:2494.0px;top:1153.0px;font-size:28px;line-height:28px;color:#e8e4de;width:39.0px;overflow:hidden;">Sep</div><div class="a t" id="t_fn6" style="left:1785.0px;top:1209.0px;font-size:28px;line-height:28px;color:#bcbce6;letter-spacing:1.25px;">README.md</div><div class="a t" id="t_sz6" style="left:2295.0px;top:1209.0px;font-size:28px;line-height:28px;color:#e8e4de;letter-spacing:2.00px;">1.1 KB</div><div class="a t" id="t_md6" style="left:2493.0px;top:1209.0px;font-size:28px;line-height:28px;color:#e8e4de;width:40.0px;overflow:hidden;">Feb</div><div class="a t" id="t_fn7" style="left:1786.0px;top:1265.0px;font-size:28px;line-height:28px;color:#bcbce6;letter-spacing:2.40px;">scr</div><div class="a t" id="t_fn8" style="left:1787.0px;top:1321.0px;font-size:28px;line-height:28px;color:#bcbce6;letter-spacing:0.50px;">tasks</div><div class="a t" id="t_fn9" style="left:1787.0px;top:1377.0px;font-size:28px;line-height:28px;color:#bcbce6;letter-spacing:1.70px;">views</div><div class="a" id="console" style="left:36.5px;top:236.5px;font-family:'Liberation Mono', monospace;font-size:30px;line-height:42px;color:#e6e1dc;white-space:pre">R version 4.0.3 (2020-10-10) -- &quot;Bunny-Wunnies Freak Out&quot;
Copyright (C) 2020 The R Foundation for Statistical Computing
Platform: x86_64-apple-darwin17.0 (64-bit)

R is free software and comes with ABSOLUTELY NO WARRANTY.
You are welcome to redistribute it under certain conditions.
Type &#x27;license()&#x27; or &#x27;licence()&#x27; for distribution details.

  Natural language support but running in an English locale

R is a collaborative project with many contributors.
Type &#x27;contributors()&#x27; for more information and
&#x27;citation()&#x27; on how to cite R or R packages in publications.

Type &#x27;demo()&#x27; for some demos, &#x27;help()&#x27; for on-line help, or
&#x27;help.start()&#x27; for an HTML browser interface to help.
Type &#x27;q()&#x27; to quit R.</div><div class="a aa" style="left:36.5px;top:992.5px;font-family:'Liberation Mono', monospace;font-size:30px;line-height:42px;color:#1f95c8;white-space:pre">&gt;</div><div class="a" style="left:72px;top:990px;width:6px;height:44px;background:#ffffff;"></div><svg class="a" style="left:0;top:0" width="2560" height="1600" viewBox="0 0 2560 1600"><g opacity="0.92"><path d="M2451.5 765 L2470 769.1975 L2470 793.105 L2451.5 801.5 L2433 793.105 L2433 769.1975 Z" fill="#8fc6dc" stroke="#4cb6d0" stroke-width="1.2"/><path d="M2451.5 765 V801.5 M2433 769.1975 L2451.5 772.3 L2470 769.1975 M2433 793.105 L2451.5 789.82 L2470 793.105" stroke="#4cb6d0" stroke-width="0.9" fill="none" opacity="0.8"/><text x="2451.5" y="787.63" font-family="Liberation Serif" font-size="22.6" fill="#2c5d9e" text-anchor="middle">R</text></g></svg><div class="a t" id="t_entorno" style="left:1828.6px;top:373.0px;font-size:100px;line-height:100px;color:#fffa55;font-weight:700;letter-spacing:0.16px;">Entorno de</div><div class="a t" id="t_trabajo" style="left:1940.7px;top:492.0px;font-size:100px;line-height:100px;color:#fffa55;font-weight:700;">trabajo</div><div class="a t" id="t_consola" style="left:535.0px;top:1037.0px;font-size:100px;line-height:100px;color:#fffa55;font-weight:700;letter-spacing:-0.73px;">Consola</div><div class="a t" id="t_files2" style="left:1816.8px;top:1298.0px;font-size:100px;line-height:100px;color:#fffa55;font-weight:700;letter-spacing:0.10px;">Files, plots,</div><div class="a t" id="t_packages2" style="left:1684.0px;top:1419.0px;font-size:100px;line-height:100px;color:#fffa55;font-weight:700;letter-spacing:0.14px;">packages, help…</div>
</body></html>
